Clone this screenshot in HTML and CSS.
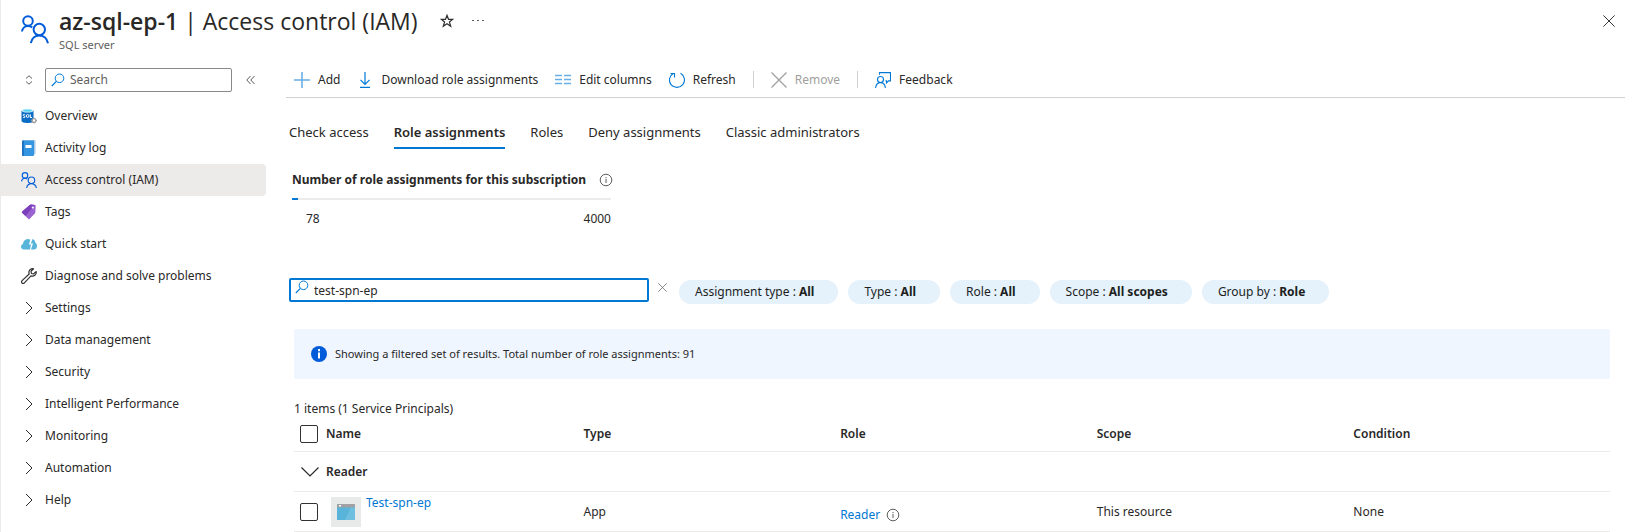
FILE: index.html
```html
<!DOCTYPE html>
<html lang="en">
<head>
<meta charset="utf-8">
<title>az-sql-ep-1 | Access control (IAM)</title>
<link rel="stylesheet" href="styles.css">
</head>
<body>
<svg class="sprite" aria-hidden="true">
  <symbol id="people" viewBox="0 0 28 28">
    <g fill="none" stroke="currentColor">
      <circle cx="7" cy="6" r="4.8"/>
      <path d="M1 16.500c.4-3.500 3-5.600 6-5.600 1.600 0 3.200.6 4.200 1.600"/>
      <circle cx="18.300" cy="14.500" r="5.700"/>
      <path d="M9.800 28.200c.8-4.600 4.200-7.800 8.500-7.800s7.800 3.200 8.700 7.800"/>
    </g>
  </symbol>
  <symbol id="magnifier" viewBox="0 0 14 14">
    <circle cx="8.500" cy="5.300" r="4.300" fill="none" stroke="currentColor"/>
    <path d="M5.400 8.400.8 13" fill="none" stroke="currentColor" stroke-width="1.200"/>
  </symbol>
  <symbol id="chevron" viewBox="0 0 16 16">
    <path d="M5 2 11 8 5 14" fill="none" stroke="currentColor"/>
  </symbol>
  <symbol id="info" viewBox="0 0 14 14">
    <circle cx="7" cy="7" r="5.800" fill="none" stroke="currentColor"/>
    <path d="M7 6v4M7 4v1.200" stroke="currentColor"/>
  </symbol>
  <symbol id="cross" viewBox="0 0 16 16">
    <path d="M.5.500l15 15M15.500.500l-15 15" fill="none" stroke="currentColor" stroke-width="1.300"/>
  </symbol>
</svg>

<div class="blade">
  <header class="header">
    <svg class="header-icon"><use href="#people"/></svg>
    <div class="heading">
      <div class="title-row">
        <h1 class="title"><strong>az-sql-ep-1</strong> | Access control (IAM)</h1>
        <button class="icon-button favorite" aria-label="Add to favorites">
          <svg width="14" height="14" viewBox="0 0 14 14"><path d="M7 1.300 8.500 5.300h4.300L9.400 8l1.300 4.300L7 9.700l-3.700 2.600L4.600 8 1.200 5.300h4.300z" fill="none" stroke="currentColor" stroke-width="1.200"/></svg>
        </button>
        <button class="icon-button" aria-label="More actions">
          <svg width="12" height="14" viewBox="0 0 12 14"><path d="M0 6.500h2M5 6.500h2M10 6.500h2" stroke="currentColor" stroke-width="1.200"/></svg>
        </button>
      </div>
      <p class="subtitle">SQL server</p>
    </div>
    <button class="icon-button close" aria-label="Close"><svg width="12" height="12"><use href="#cross"/></svg></button>
  </header>

  <div class="body">
    <aside class="sidebar">
      <div class="menu-tools">
        <button class="icon-button sorter" aria-label="Expand or collapse all">
          <svg width="16" height="16" viewBox="0 0 16 16"><path d="M5 6.500 8 3.800l3 2.700M5 9.500l3 2.700 3-2.700" fill="none" stroke="currentColor"/></svg>
        </button>
        <label class="menu-search">
          <svg width="14" height="14"><use href="#magnifier"/></svg>
          <input type="text" placeholder="Search" aria-label="Search menu">
        </label>
        <button class="icon-button" aria-label="Collapse menu">
          <svg width="10" height="10" viewBox="0 0 10 10"><path d="M4.500 1 .8 5l3.700 4M8.500 1 4.800 5l3.700 4" fill="none" stroke="currentColor"/></svg>
        </button>
      </div>
      <nav class="menu">
        <a class="menu-item" href="#">
          <svg viewBox="0 0 16 16"><path d="M.5 2.500v10.300C.5 14.200 3.200 15 6.500 15s6-.8 6-2.200V2.500z" fill="#0b6cc4"/><ellipse cx="6.500" cy="2.500" rx="6" ry="2" fill="#dff1fb"/><ellipse cx="6.500" cy="2.600" rx="4.600" ry="1.200" fill="#50d5f0"/><path d="M4 6.700c-.6-.5-1.900-.4-1.900.4 0 1 1.900.7 1.900 1.800 0 .9-1.400.9-2 .4M9.300 6.300v3.200H11" fill="none" stroke="#fff"/><circle cx="6.600" cy="8" r="1.400" fill="none" stroke="#fff"/><circle cx="13" cy="12.500" r="1.900" fill="#fff" stroke="#9b9b9b" stroke-width="1.300"/><path d="M13 9.500v1M13 14.500v1M10 12.500h1M15 12.500h1" stroke="#9b9b9b"/></svg>
          Overview</a>
        <a class="menu-item" href="#">
          <svg viewBox="0 0 16 16"><path d="M3 0h10.500q1 0 1 1v12.500l-2 2z" fill="#a9c9e6"/><rect x="1" y=".5" width="12" height="15.500" rx="1" fill="#3496e0"/><path d="M1 1.500q0-1 1-1h1V16H2q-1 0-1-1z" fill="#1f74c4"/><rect x="4.500" y="5" width="6" height="3" fill="#fff"/></svg>
          Activity log</a>
        <a class="menu-item active" href="#" aria-current="page">
          <svg class="people-small"><use href="#people"/></svg>
          Access control (IAM)</a>
        <a class="menu-item" href="#">
          <svg viewBox="0 0 16 16"><path d="M1.200 7.500 9 .8q.5-.5 1.200-.4l3.700.7q.8.200.8 1l-.4 6.500q0 .6-.5 1L8.500 15q-.8.700-1.300-.2L1 8.800q-.5-.7.200-1.300z" fill="#9a63d0"/><path d="M1.200 7.500 9 .8q.5-.5 1.200-.4l3.700.7L4.500 12 1 8.800q-.5-.7.200-1.300z" fill="#7d40bd"/><circle cx="11.800" cy="3.500" r="1.100" fill="#fff"/></svg>
          Tags</a>
        <a class="menu-item" href="#">
          <svg viewBox="0 0 16 16"><path d="M3 13.500C1.200 13.500 0 12.200 0 10.700c0-1.400.9-2.400 2-2.700C2.200 5.200 4 3 6.700 3c1 0 1.800.3 2.600.8L8 8.500h2L9 13.500z" fill="#59b4d9"/><path d="M10 13.500 12 7.500h-2.200L11.500 3c1.400.3 2.700 1.700 2.900 3.800 1 .6 1.600 1.900 1.600 3.300 0 2-1.200 3.400-3 3.400z" fill="#59b4d9"/></svg>
          Quick start</a>
        <a class="menu-item" href="#">
          <svg viewBox="0 0 16 16"><path d="M12.600.8C10.300.1 7.600 1.900 7.900 4.700c0 .5.100.9.300 1.300L1.100 12.600c-1.700 1.700.7 4 2.300 2.300L10 7.900c2.800 1 5.700-1.300 5.200-4.400l-2.600 2.400-2.200-.4-.4-2.200z" fill="none" stroke="#323130" stroke-width="1.200" stroke-linejoin="round"/></svg>
          Diagnose and solve problems</a>
        <button class="menu-item"><svg><use href="#chevron"/></svg>Settings</button>
        <button class="menu-item"><svg><use href="#chevron"/></svg>Data management</button>
        <button class="menu-item"><svg><use href="#chevron"/></svg>Security</button>
        <button class="menu-item"><svg><use href="#chevron"/></svg>Intelligent Performance</button>
        <button class="menu-item"><svg><use href="#chevron"/></svg>Monitoring</button>
        <button class="menu-item"><svg><use href="#chevron"/></svg>Automation</button>
        <button class="menu-item"><svg><use href="#chevron"/></svg>Help</button>
      </nav>
    </aside>

    <main class="main">
      <div class="toolbar" role="toolbar" aria-label="Commands">
        <button class="command"><svg viewBox="0 0 16 16"><path d="M8 0v16M0 8h16" stroke="#69afe5" stroke-width="1.600"/></svg>Add</button>
        <button class="command"><svg viewBox="0 0 16 16"><path d="M8 0v12M3.500 7.800 8 12.300l4.500-4.500M3 15.400h10" fill="none" stroke="#0078d4" stroke-width="1.200"/></svg>Download role assignments</button>
        <button class="command"><svg viewBox="0 0 16 16"><path d="M0 3.500h7M9 3.500h7M0 7.500h7M9 7.500h7M0 11.500h7M9 11.500h7" stroke="#69afe5" stroke-width="1.600"/></svg>Edit columns</button>
        <button class="command"><svg viewBox="0 0 16 16"><path d="M11.500 1.300A7.500 7.500 0 1 1 4.200 1.400M1.500 1.500h4v4" fill="none" stroke="#0078d4" stroke-width="1.100"/></svg>Refresh</button>
        <span class="separator"></span>
        <button class="command" disabled><svg><use href="#cross"/></svg>Remove</button>
        <span class="separator"></span>
        <button class="command"><svg viewBox="0 0 16 16"><g fill="none" stroke="#0078d4" stroke-width="1.100"><circle cx="5.500" cy="7.500" r="3"/><path d="M.600 16c.3-3.400 2.300-5.400 4.900-5.400s4.600 2 4.900 5.400M4.500 2.700V.600h11v8.300h-2l-2 2V8.900h-1"/></g></svg>Feedback</button>
      </div>

      <div class="tabs" role="tablist">
        <button class="tab" role="tab">Check access</button>
        <button class="tab selected" role="tab" aria-selected="true">Role assignments</button>
        <button class="tab" role="tab">Roles</button>
        <button class="tab" role="tab">Deny assignments</button>
        <button class="tab" role="tab">Classic administrators</button>
      </div>

      <section class="usage">
        <h2 class="usage-title">Number of role assignments for this subscription <svg class="info"><use href="#info"/></svg></h2>
        <div class="meter"><div class="meter-fill" style="width: 1.95%"></div></div>
        <div class="usage-values"><span>78</span><span>4000</span></div>
      </section>

      <div class="filters">
        <label class="filter-search">
          <svg width="14" height="14"><use href="#magnifier"/></svg>
          <input type="text" value="test-spn-ep" aria-label="Search by name or email">
        </label>
        <button class="icon-button clear" aria-label="Clear search"><svg width="9" height="9"><use href="#cross"/></svg></button>
        <div class="pills">
          <button class="pill">Assignment type : <b>All</b></button>
          <button class="pill">Type : <b>All</b></button>
          <button class="pill">Role : <b>All</b></button>
          <button class="pill">Scope : <b>All scopes</b></button>
          <button class="pill">Group by : <b>Role</b></button>
        </div>
      </div>

      <div class="results">
        <div class="banner" role="status">
          <svg width="16" height="16" viewBox="0 0 16 16"><circle cx="8" cy="8" r="8" fill="#015cda"/><path d="M8 6.500v6M8 3v2.200" stroke="#fff" stroke-width="2"/></svg>
          Showing a filtered set of results. Total number of role assignments: 91
        </div>
        <p class="count">1 items (1 Service Principals)</p>
        <table class="grid">
          <thead>
            <tr>
              <th class="name-col" scope="col"><span class="cell"><input type="checkbox" aria-label="Select all">Name</span></th>
              <th scope="col">Type</th>
              <th scope="col">Role</th>
              <th scope="col">Scope</th>
              <th scope="col">Condition</th>
            </tr>
          </thead>
          <tbody>
            <tr>
              <th colspan="5" scope="rowgroup"><button class="group"><svg width="20" height="12" viewBox="0 0 20 12"><path d="M1.500 1.500 10 10l8.500-8.500" fill="none" stroke="currentColor" stroke-width="1.200"/></svg>Reader</button></th>
            </tr>
            <tr>
              <td>
                <span class="cell"><input type="checkbox" aria-label="Select Test-spn-ep">
                  <span class="avatar"><svg width="20" height="18" viewBox="0 0 20 18"><path d="M1 1h18v16H1z" fill="#59b4d9"/><path d="M1 1h18v3.500H1z" fill="#a0a1a2"/><path d="M3 2h2v1.500H3z" fill="#fff"/><path d="M19 4.500V17H9l6-12.500z" fill="#6fbfe0"/></svg></span>
                  <a class="principal" href="#">Test-spn-ep</a>
                </span>
              </td>
              <td>App</td>
              <td><span class="role"><a href="#">Reader</a><svg class="info"><use href="#info"/></svg></span></td>
              <td>This resource</td>
              <td>None</td>
            </tr>
          </tbody>
        </table>
      </div>
    </main>
  </div>
</div>
</body>
</html>
```
FILE: styles.css
```css
* { box-sizing: border-box; }

body {
  margin: 0;
  background: #fff;
  color: #292827;
  font: 12px/18px "Noto Sans", "Open Sans", sans-serif;
}

button, input {
  font: inherit;
  color: inherit;
}

button {
  margin: 0;
  padding: 0;
  border: 0;
  background: none;
  text-align: left;
  white-space: nowrap;
}

a { color: #0078d4; text-decoration: none; }
h1, h2, p { margin: 0; }
svg { display: block; flex: none; }
.sprite { position: absolute; width: 0; height: 0; }

.blade {
  min-height: 100vh;
  border-left: 1px solid #eaeaea;
}

/* Header */
.header {
  display: flex;
  align-items: flex-start;
  padding: 6px 28px 0 20px;
}
.header-icon {
  width: 28px;
  height: 30px;
  margin: 8px 10px 0 0;
  color: #015cda;
  stroke-width: 2;
}
.heading { flex: 1; }
.title-row { display: flex; align-items: center; }
.title {
  font-family: "Open Sans", "Noto Sans", sans-serif;
  font-size: 23px;
  line-height: 30px;
  font-weight: 400;
}
.title strong { font-weight: 600; }
.subtitle {
  color: #605e5c;
  font-size: 11px;
  line-height: 18px;
}
.icon-button {
  display: flex;
  align-items: center;
  justify-content: center;
  color: #605e5c;
}
.favorite { margin: 0 18px 0 22px; color: #323130; }
.close { margin-top: 9px; color: #323130; }

.body { display: flex; margin-top: 14px; }

/* Sidebar */
.sidebar { flex: none; width: 265px; }
.menu-tools {
  display: flex;
  align-items: center;
  height: 24px;
  padding-left: 20px;
  margin-bottom: 8px;
}
.sorter { margin-right: 8px; }
.menu-search {
  display: flex;
  align-items: center;
  width: 187px;
  height: 24px;
  margin-right: 14px;
  padding: 0 5px;
  border: 1px solid #8a8886;
  border-radius: 2px;
  color: #0078d4;
}
.menu-search input, .filter-search input {
  flex: 1;
  min-width: 0;
  padding: 0;
  border: 0;
  outline: 0;
  background: none;
  color: #292827;
}
.menu-search input { margin-left: 5px; }
.menu-search input::placeholder { color: #605e5c; }
.menu { display: flex; flex-direction: column; }
.menu-item {
  display: flex;
  align-items: center;
  gap: 8px;
  height: 32px;
  padding-left: 20px;
  border-radius: 0 4px 4px 0;
  color: #292827;
}
.menu-item svg { width: 16px; height: 16px; }
.menu-item .people-small { color: #015cda; stroke-width: 2; }
.menu-item.active { background: #edebe9; }

/* Main column */
.main { flex: 1; min-width: 0; padding: 0 18px 0 20px; }
.toolbar {
  display: flex;
  align-items: center;
  gap: 17px;
  height: 30px;
  padding: 0 8px 6px;
  border-bottom: 1px solid #d2d0ce;
}
.command { display: flex; align-items: center; gap: 8px; }
.command svg { width: 16px; height: 16px; }
.command:disabled { color: #a19f9d; }
.separator { width: 1px; height: 17px; background: #d2d0ce; }

.tabs {
  display: flex;
  gap: 25px;
  padding: 25px 0 0 3px;
  font-size: 13px;
}
.tab { padding-bottom: 6px; border-bottom: 2px solid transparent; }
.tab.selected { border-color: #0078d4; font-weight: 600; }

.usage { width: 325px; padding: 22px 0 0 6px; }
.usage-title {
  display: flex;
  align-items: center;
  gap: 13px;
  font-size: 12px;
  line-height: 18px;
  font-weight: 700;
  white-space: nowrap;
}
.info { width: 14px; height: 14px; color: #605e5c; }
.meter { height: 2px; margin-top: 9px; background: #edebe9; }
.meter-fill { height: 2px; background: #0078d4; }
.usage-values {
  display: flex;
  justify-content: space-between;
  padding: 10px 0 0 14px;
}

.filters {
  display: flex;
  align-items: flex-start;
  margin-top: 50px;
  padding-left: 3px;
}
.filter-search {
  display: flex;
  width: 360px;
  height: 24px;
  padding-left: 4px;
  border: 2px solid #0078d4;
  border-radius: 2px;
  color: #0078d4;
}
.filter-search input { margin-left: 5px; padding-top: 2px; }
.clear { width: 26px; height: 18px; margin-right: 4px; }
.pills { display: flex; gap: 10px; padding-top: 2px; }
.pill {
  height: 24px;
  padding: 0 24px 0 16px;
  border-radius: 12px;
  background: #e5f1fb;
  color: #201f1e;
}

.results { padding: 25px 15px 0 8px; }
.banner {
  display: flex;
  align-items: center;
  gap: 8px;
  height: 50px;
  padding: 0 17px;
  border-radius: 2px;
  background: #eff6ff;
  font-size: 11px;
}
.count { margin-top: 21px; }

.grid {
  width: 100%;
  border-collapse: collapse;
  table-layout: fixed;
}
.grid th, .grid td {
  height: 40px;
  padding: 0;
  border-bottom: 1px solid #edebe9;
  text-align: left;
  font-weight: 400;
}
.grid th { font-weight: 600; }
.grid thead th { height: 33px; }
.grid tbody th, .grid tbody td { padding-top: 2px; }
.name-col { width: 22%; }
.cell { display: flex; align-items: center; padding-left: 6px; }
.cell input {
  appearance: none;
  width: 18px;
  height: 18px;
  margin: 0 8px 0 0;
  border: 1px solid #323130;
  border-radius: 2px;
}
.group { display: flex; align-items: center; gap: 6px; padding-left: 6px; }
.avatar {
  display: grid;
  place-items: center;
  width: 30px;
  height: 30px;
  margin: 0 5px;
  background: #e8e9e9;
}
.principal { align-self: flex-start; line-height: 12px; }
.role { display: flex; align-items: center; gap: 6px; padding-top: 6px; }
```
